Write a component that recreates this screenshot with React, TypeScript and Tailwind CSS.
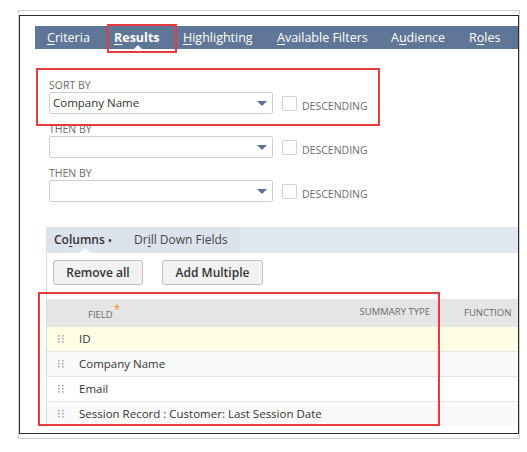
import React from "react";

const font = { fontFamily: '"Open Sans", "Noto Sans", Arial, sans-serif' };

function Arrow() {
  return (
    <svg width="10" height="5" viewBox="0 0 10 5" className="absolute right-[5px] top-[8px]">
      <polygon points="0,0 10,0 5,5" fill="#5b7095" />
    </svg>
  );
}

function SortRow({ label, value }: { label: string; value?: string }) {
  return (
    <div className="flex flex-col">
      <div className="text-[10.5px] leading-[14px] text-[#6b6b6b] uppercase">{label}</div>
      <div className="flex items-start">
        <div className="relative w-[224px] h-[22px] border border-[#cfcfcf] bg-white rounded-[2px] flex items-center pl-[3px] text-[11.5px] text-[#333]">
          {value}
          <Arrow />
        </div>
        <div className="ml-[9px] mt-[4px] w-[15px] h-[15px] border border-[#d2d2d2] bg-white rounded-[1px]" />
        <div className="ml-[5px] mt-[7px] text-[10.5px] leading-[14px] text-[#6b6b6b]">DESCENDING</div>
      </div>
    </div>
  );
}

function Handle() {
  return (
    <svg width="6" height="8" viewBox="0 0 6 8" className="shrink-0">
      {[0, 3, 6].map((y) =>
        [0, 4].map((x) => <rect key={`${x}-${y}`} x={x} y={y} width="1.6" height="1.6" fill="#a9a9a9" />)
      )}
    </svg>
  );
}

function Row({ text, bg }: { text: string; bg: string }) {
  return (
    <div className={`h-[25px] flex items-center pl-[11px] border-t border-[#e6e6e6] ${bg}`}>
      <Handle />
      <span className="ml-[15px] text-[11.5px] text-[#333]">{text}</span>
    </div>
  );
}

export default function App() {
  return (
    <div className="w-[527px] h-[452px] bg-white pt-[10px] pl-[18px]" style={font}>
      <div className="w-[502px] h-[429px] border border-[#cfcfcf] pt-[4px] pb-[4px]">
        <div className="h-full border border-[#2b2b2b] overflow-hidden">
          {/* Main tabs */}
          <div className="ml-[15px] mt-[10px] h-[23px] bg-[#5f7697] flex pl-[12px] text-[12.5px] leading-[23px] text-white whitespace-nowrap">
            <div className="w-[67px]">
              <u className="underline-offset-2">C</u>riteria
            </div>
            <div className="relative w-[69px] font-bold">
              <u className="underline-offset-2">R</u>esults
              <div className="absolute bottom-0 left-[20px] w-0 h-0 border-l-[4px] border-r-[4px] border-b-[4px] border-l-transparent border-r-transparent border-b-white" />
              <div className="absolute left-[-7px] top-[-2px] w-[70px] h-[29px] border-2 border-[#e8393f]" />
            </div>
            <div className="w-[94px]">
              <u className="underline-offset-2">H</u>ighlighting
            </div>
            <div className="w-[114px]">
              <u className="underline-offset-2">A</u>vailable Filters
            </div>
            <div className="w-[78px]">
              A<u className="underline-offset-2">u</u>dience
            </div>
            <div>
              R<u className="underline-offset-2">o</u>les
            </div>
          </div>

          {/* Sort section */}
          <div className="ml-[29px] mt-[29px] flex flex-col gap-[8px]">
            <div className="relative">
              <SortRow label="Sort By" value="Company Name" />
              <div className="absolute left-[-13px] top-[-10px] w-[344px] h-[58px] border-2 border-[#e8393f]" />
            </div>
            <SortRow label="Then By" />
            <SortRow label="Then By" />
          </div>

          {/* Sub tabs */}
          <div className="ml-[26px] mt-[25px]">
            <div className="h-[26px] bg-[#e1e7f0] flex text-[12px] leading-[26px] text-[#333] whitespace-nowrap">
              <div className="flex bg-[#dde3ec] pr-[12px]">
                <div className="relative w-[88px] pl-[8px] font-semibold">
                  Co<u className="underline-offset-2">l</u>umns <span className="text-[10px]">•</span>
                  <div className="absolute bottom-0 left-[32px] w-0 h-0 border-l-[7px] border-r-[7px] border-b-[5px] border-l-transparent border-r-transparent border-b-[#f4f6f9]" />
                </div>
                <div className="text-[#444]">
                  Dr<u className="underline-offset-2">i</u>ll Down Fields
                </div>
              </div>
            </div>

            <div className="border-l border-[#dcdcdc]">
              <div className="flex gap-[19px] pl-[6px] pt-[7px]">
                <div className="w-[90px] h-[25px] flex items-center justify-center bg-[#f2f2f2] border border-[#bdbdbd] rounded-[3px] text-[12px] font-semibold text-[#333]">
                  Remove all
                </div>
                <div className="w-[101px] h-[25px] flex items-center justify-center bg-[#f2f2f2] border border-[#bdbdbd] rounded-[3px] text-[12px] font-semibold text-[#333]">
                  Add Multiple
                </div>
              </div>

              <div className="relative mt-[14px]">
                <div className="h-[27px] bg-[#e5e5e5] flex items-center pt-[2px] text-[9.5px] text-[#6b6b6b] whitespace-nowrap">
                  <div className="w-[383px] flex justify-between">
                    <span className="pl-[41px]">
                      FIELD<span className="relative top-[-4px] ml-[1px] text-[12px] text-[#e59a2c]">*</span>
                    </span>
                    <span>SUMMARY TYPE</span>
                  </div>
                  <span className="ml-[34px]">FUNCTION</span>
                </div>
                <Row text="ID" bg="bg-[#ffffe6]" />
                <Row text="Company Name" bg="bg-[#fafafa]" />
                <Row text="Email" bg="bg-white" />
                <Row text="Session Record : Customer: Last Session Date" bg="bg-[#fafafa]" />
                <div className="absolute left-[-9px] top-[-7px] w-[402px] h-[134px] border-2 border-[#e8393f]" />
              </div>
            </div>
          </div>
        </div>
      </div>
    </div>
  );
}
